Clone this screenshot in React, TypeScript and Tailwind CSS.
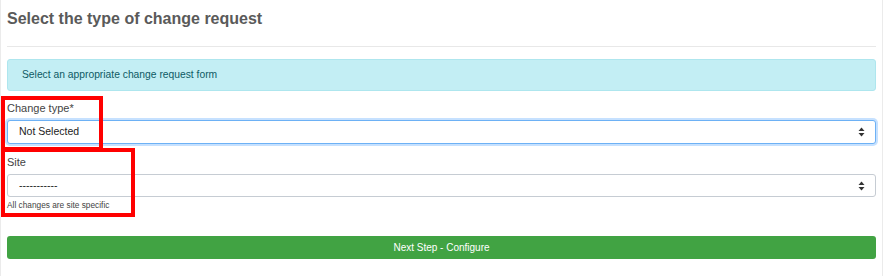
import React from "react";

function UpDown() {
  return (
    <svg width="7" height="10" viewBox="0 0 7 10" className="shrink-0" aria-hidden>
      <path d="M3.5 0.5 L6.5 4 L0.5 4 Z" fill="#333" />
      <path d="M3.5 9.5 L6.5 6 L0.5 6 Z" fill="#333" />
    </svg>
  );
}

function FakeSelect({ value, focused }: { value: string; focused?: boolean }) {
  return (
    <div
      className={
        focused
          ? "flex h-[24px] items-center justify-between rounded-[3px] border border-[#6db1f5] bg-white pl-[11px] pr-[10px] shadow-[0_0_0_2px_rgba(128,189,255,0.45)]"
          : "flex h-[23px] items-center justify-between rounded-[3px] border border-[#c6ccd3] bg-white pl-[11px] pr-[10px]"
      }
    >
      <span className="text-[10.5px] text-[#222]">{value}</span>
      <UpDown />
    </div>
  );
}

export default function App() {
  return (
    <div
      className="relative h-[276px] w-[883px] overflow-hidden bg-white"
      style={{ fontFamily: '"Liberation Sans", Arial, sans-serif' }}
    >
      <div className="h-full border-x border-[#ebebeb] pl-[6px] pr-[6px]">
        <h1 className="pt-[9px] text-[16px] font-bold leading-[20px] text-[#5a5a5a]">
          Select the type of change request
        </h1>
        <div className="mt-[17px] border-t border-[#e8e8e8]" />
        <div className="mt-[12px] flex h-[32px] items-center rounded-[3px] border border-[#aee6ee] bg-[#c3eef4] pl-[14px] text-[10.3px] text-[#0e5a64]">
          Select an appropriate change request form
        </div>
        <div className="mt-[11px] text-[11px] leading-[13px] text-[#444]">Change type*</div>
        <div className="mt-[5px]">
          <FakeSelect value="Not Selected" focused />
        </div>
        <div className="mt-[12px] text-[11px] leading-[13px] text-[#444]">Site</div>
        <div className="mt-[5px]">
          <FakeSelect value="-----------" />
        </div>
        <div className="mt-[3px] text-[8.3px] leading-[10px] text-[#444]">All changes are site specific</div>
        <div className="mt-[26px] flex h-[23px] items-center justify-center rounded-[3px] bg-[#41a343] text-[10px] text-white">
          Next Step - Configure
        </div>
      </div>
      <div className="absolute left-[1px] top-[96px] h-[55px] w-[102px] border-[4px] border-[#ff0000]" />
      <div className="absolute left-[1px] top-[148px] h-[69px] w-[134px] border-[4px] border-[#ff0000]" />
    </div>
  );
}
